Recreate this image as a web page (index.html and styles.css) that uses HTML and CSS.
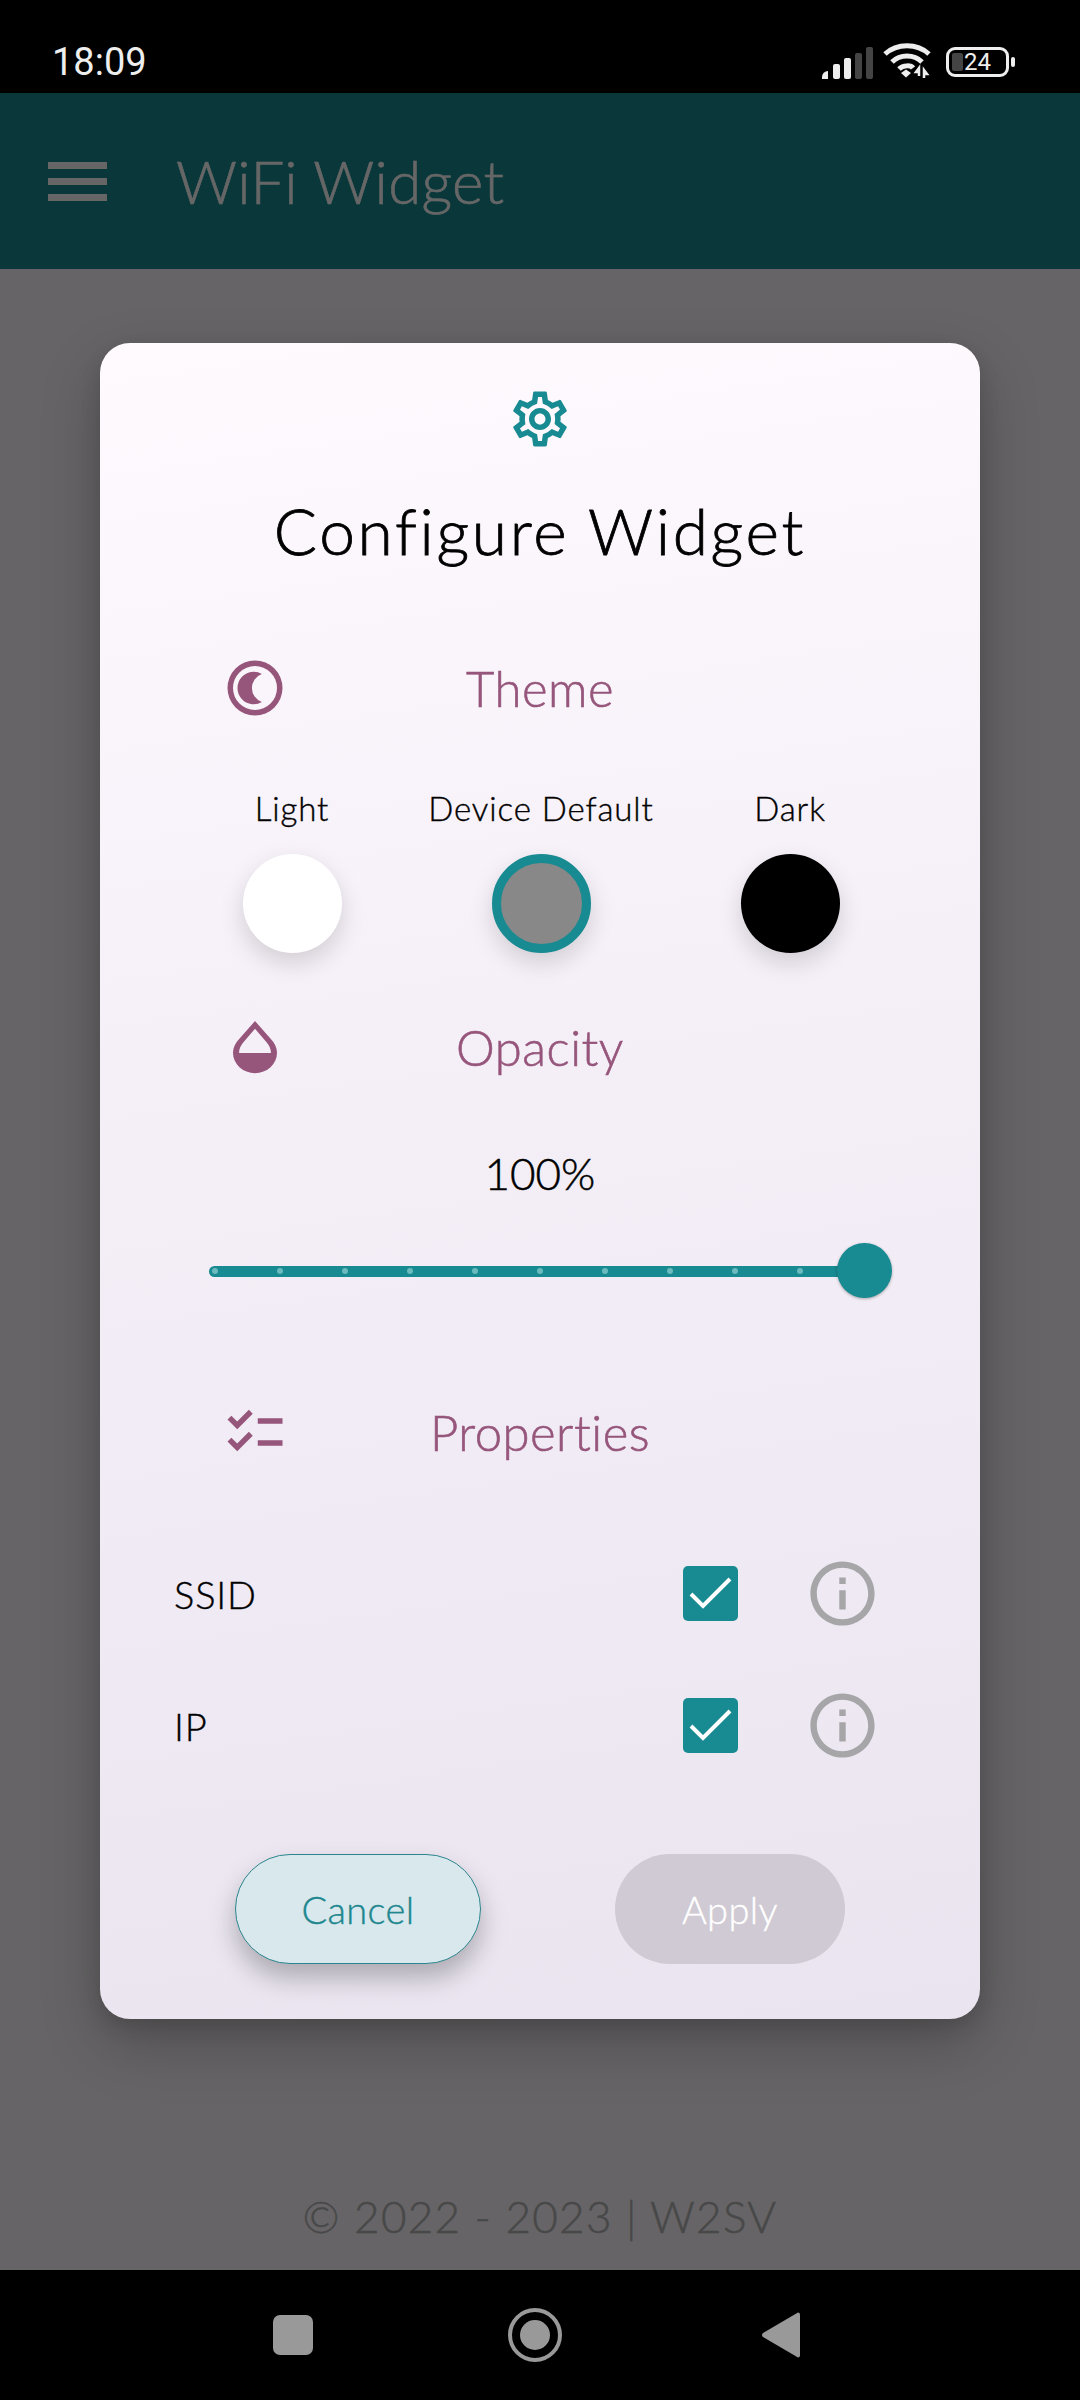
FILE: index.html
```html
<!DOCTYPE html>
<html lang="en">
  <head>
    <meta charset="UTF-8" />
    <meta name="viewport" content="width=device-width, initial-scale=1.0" />
    <title>WiFi Widget</title>
    <link rel="stylesheet" href="styles.css">
  </head>
  <body>
    <!-- status bar -->
    <header class="status-bar">
      <span class="status-time">18:09</span>
      <div class="status-icons">
        <svg class="icon-signal" width="58" height="32" viewBox="0 0 58 32">
          <path d="M0 30a6 6 0 0 1 6-6v8H0z" fill="#eee" />
          <rect x="11" y="17" width="7" height="15" rx="2" fill="#eee" />
          <rect x="22" y="11" width="7" height="21" rx="2" fill="#eee" />
          <rect x="33" y="6" width="7" height="26" rx="2" fill="#444" />
          <rect x="44" y="0" width="7" height="32" rx="2" fill="#444" />
        </svg>
        <svg class="icon-wifi" width="48" height="36" viewBox="0 0 48 36" fill="none" stroke="#eee" stroke-width="5">
          <path d="M2 11C14 0 34 0 46 11" />
          <path d="M9 19C17 11 31 11 39 19" />
          <path d="M16 26C20 22 28 22 30 25" />
          <path d="M18 30l5-3.500 5 3.500-5 4.500z" fill="#eee" stroke="none" />
          <path d="M36 25v8M36 25l-3 4h3zM41 35v-8l3 4h-3z" stroke-width="2.500" fill="#eee" />
        </svg>
        <div class="battery">
          <div class="battery-body">
            <span class="battery-fill"></span>
            <span class="battery-text">24</span>
          </div>
          <span class="battery-nub"></span>
        </div>
      </div>
    </header>

    <div class="app">
      <nav class="toolbar">
        <div class="menu-icon"><span></span><span></span><span></span></div>
        <span class="toolbar-title">WiFi Widget</span>
      </nav>
      <main class="app-body">
        <p class="copyright">© 2022 - 2023 | W2SV</p>
      </main>
      <div class="scrim"></div>

      <!-- config dialog -->
      <section class="dialog">
        <svg class="dialog-icon" width="66" height="66" viewBox="0 0 24 24" fill="#188a91">
          <path d="M19.43 12.98c.04-.32.07-.64.07-.98 0-.34-.03-.66-.07-.98l2.11-1.65c.19-.15.24-.42.12-.64l-2-3.46c-.09-.16-.26-.25-.44-.25-.06 0-.12.01-.17.03l-2.49 1c-.52-.4-1.08-.73-1.69-.98l-.38-2.65C14.46 2.18 14.25 2 14 2h-4c-.25 0-.46.18-.49.42l-.38 2.65c-.61.25-1.17.59-1.69.98l-2.49-1c-.06-.02-.12-.03-.18-.03-.17 0-.34.09-.43.25l-2 3.46c-.13.22-.07.49.12.64l2.11 1.65c-.04.32-.07.65-.07.98 0 .33.03.66.07.98l-2.11 1.65c-.19.15-.24.42-.12.64l2 3.46c.09.16.26.25.44.25.06 0 .12-.01.17-.03l2.49-1c.52.4 1.08.73 1.69.98l.38 2.65c.03.24.24.42.49.42h4c.25 0 .46-.18.49-.42l.38-2.65c.61-.25 1.17-.59 1.69-.98l2.49 1c.06.02.12.03.18.03.17 0 .34-.09.43-.25l2-3.46c.12-.22.07-.49-.12-.64l-2.11-1.65zm-1.98-1.71c.04.31.05.52.05.73 0 .21-.02.43-.05.73l-.14 1.13.89.7 1.08.84-.7 1.21-1.27-.51-1.04-.42-.9.68c-.43.32-.84.56-1.25.73l-1.06.43-.16 1.13-.2 1.35h-1.4l-.19-1.35-.16-1.13-1.06-.43c-.43-.18-.83-.41-1.23-.71l-.91-.7-1.06.43-1.27.51-.7-1.21 1.08-.84.89-.7-.14-1.13c-.03-.31-.05-.54-.05-.74s.02-.43.05-.73l.14-1.13-.89-.7-1.08-.84.7-1.21 1.27.51 1.04.42.9-.68c.43-.32.84-.56 1.25-.73l1.06-.43.16-1.13.2-1.35h1.39l.19 1.35.16 1.13 1.06.43c.43.18.83.41 1.23.71l.91.7 1.06-.43 1.27-.51.7 1.21-1.07.85-.89.7.14 1.13zM12 8c-2.21 0-4 1.79-4 4s1.79 4 4 4 4-1.79 4-4-1.79-4-4-4zm0 6c-1.1 0-2-.9-2-2s.9-2 2-2 2 .9 2 2-.9 2-2 2z" />
        </svg>
        <h1 class="dialog-title">Configure Widget</h1>

        <div class="section-head head-theme">
          <svg class="section-icon" width="66" height="66" viewBox="0 0 24 24" fill="#96557b">
            <path fill-rule="evenodd" d="M12 2a10 10 0 1 0 0 20 10 10 0 0 0 0-20zm0 2a8 8 0 1 1 0 16 8 8 0 0 1 0-16z" />
            <path d="M14.500 6.900A5.900 5.900 0 1 0 14.500 17.100A5.400 5.400 0 0 1 14.500 6.900z" />
          </svg>
          <h2 class="section-title">Theme</h2>
        </div>
        <div class="theme-options">
          <div class="theme-option">
            <span class="theme-label">Light</span>
            <span class="swatch swatch-light"></span>
          </div>
          <div class="theme-option">
            <span class="theme-label">Device Default</span>
            <span class="swatch swatch-default"></span>
          </div>
          <div class="theme-option">
            <span class="theme-label">Dark</span>
            <span class="swatch swatch-dark"></span>
          </div>
        </div>

        <div class="section-head head-opacity">
          <svg class="section-icon" width="66" height="66" viewBox="0 0 24 24" fill="#96557b">
            <path fill-rule="evenodd" d="M12 2.500l5.600 6.400c1.500 1.500 2.400 3.300 2.400 5.200a8 7.400 0 0 1-16 0c0-1.900.9-3.700 2.400-5.200zM12 5.400L7.800 10.300C6.800 11.400 6.200 12.800 6.200 14.200H17.800C17.800 12.800 17.200 11.400 16.200 10.300z" />
          </svg>
          <h2 class="section-title">Opacity</h2>
        </div>
        <div class="opacity-value">100%</div>
        <div class="slider">
          <div class="slider-track">
            <i></i><i></i><i></i><i></i><i></i><i></i><i></i><i></i><i></i><i></i>
          </div>
          <span class="slider-thumb"></span>
        </div>

        <div class="section-head head-props">
          <svg class="section-icon" width="66" height="66" viewBox="0 0 24 24" fill="#96557b">
            <path d="M22 7h-9v2h9V7zm0 8h-9v2h9v-2zM5.540 11 2 7.460l1.410-1.410 2.120 2.120 4.240-4.240 1.410 1.410L5.540 11zm0 8L2 15.460l1.410-1.410 2.120 2.120 4.240-4.240 1.410 1.410L5.540 19z" />
          </svg>
          <h2 class="section-title">Properties</h2>
        </div>
        <div class="prop-list">
          <div class="prop-row">
            <span class="prop-name">SSID</span>
            <span class="checkbox">
              <svg width="55" height="55" viewBox="0 0 55 55" fill="none" stroke="#fff" stroke-width="4"><path d="M8 28l12 12 27-27" /></svg>
            </span>
            <svg class="info-icon" width="77" height="77" viewBox="0 0 24 24" fill="#a6a6a8">
              <path d="M11 7h2v2h-2zm0 4h2v6h-2zm1-9C6.480 2 2 6.480 2 12s4.480 10 10 10 10-4.480 10-10S17.520 2 12 2zm0 18c-4.410 0-8-3.590-8-8s3.590-8 8-8 8 3.590 8 8-3.590 8-8 8z" />
            </svg>
          </div>
          <div class="prop-row">
            <span class="prop-name">IP</span>
            <span class="checkbox">
              <svg width="55" height="55" viewBox="0 0 55 55" fill="none" stroke="#fff" stroke-width="4"><path d="M8 28l12 12 27-27" /></svg>
            </span>
            <svg class="info-icon" width="77" height="77" viewBox="0 0 24 24" fill="#a6a6a8">
              <path d="M11 7h2v2h-2zm0 4h2v6h-2zm1-9C6.480 2 2 6.480 2 12s4.480 10 10 10 10-4.480 10-10S17.520 2 12 2zm0 18c-4.410 0-8-3.590-8-8s3.590-8 8-8 8 3.590 8 8-3.590 8-8 8z" />
            </svg>
          </div>
        </div>

        <div class="dialog-actions">
          <button class="btn btn-cancel">Cancel</button>
          <button class="btn btn-apply">Apply</button>
        </div>
      </section>
    </div>

    <!-- android nav bar -->
    <footer class="nav-bar">
      <span class="nav-square"></span>
      <span class="nav-home"><span></span></span>
      <svg class="nav-back" width="38" height="46" viewBox="0 0 38 46" fill="#999">
        <path d="M36 0.500a2 2 0 0 1 2 2v41a2 2 0 0 1-2 2L1 25a2.500 2.500 0 0 1 0-4z" />
      </svg>
    </footer>
  </body>
</html>
```

FILE: styles.css
```css
:root {
  --teal: #188a91;
  --plum: #96557b;
  --ui-font: "Lato", "Liberation Sans", sans-serif;
}

* {
  margin: 0;
  padding: 0;
  box-sizing: border-box;
}

body {
  width: 1080px;
  height: 2400px;
  display: flex;
  flex-direction: column;
  background: #000;
  font-family: var(--ui-font);
  overflow: hidden;
}

/* status bar */
.status-bar {
  height: 93px;
  display: flex;
  align-items: flex-end;
  justify-content: space-between;
  padding: 0 65px 15px 52px;
  color: #eee;
}

.status-time {
  font-family: "Roboto", sans-serif;
  font-size: 38px;
  font-weight: 400;
  line-height: 32px;
}

.status-icons {
  display: flex;
  align-items: flex-end;
  height: 32px;
}

.icon-signal {
  margin-right: 3px;
  margin-bottom: -1px;
}

.icon-wifi {
  margin-bottom: -1px;
  margin-right: 15px;
}

.battery {
  display: flex;
  align-items: center;
  gap: 2px;
  margin-bottom: 1px;
}

.battery-body {
  width: 63px;
  height: 30px;
  border: 3px solid #eee;
  border-radius: 9px;
  display: flex;
  align-items: center;
  padding-left: 3px;
  gap: 1px;
}

.battery-fill {
  width: 11px;
  height: 18px;
  background: #444;
  border-radius: 2px;
}

.battery-text {
  font-family: "Roboto", sans-serif;
  font-size: 24px;
  line-height: 1;
}

.battery-nub {
  width: 4px;
  height: 10px;
  background: #eee;
  border-radius: 2px;
}

/* app under the dialog */
.app {
  position: relative;
  flex: 1;
  display: flex;
  flex-direction: column;
}

.toolbar {
  height: 176px;
  background: var(--teal);
  display: flex;
  align-items: center;
  padding-left: 48px;
  color: #fff;
}

.menu-icon {
  width: 59px;
  display: flex;
  flex-direction: column;
  gap: 9px;
}

.menu-icon span {
  height: 7px;
  background: #fff;
}

.toolbar-title {
  margin-left: 69px;
  font-size: 60px;
  font-weight: 300;
  -webkit-text-stroke: 0.6px currentColor;
  letter-spacing: 0.3px;
}

.app-body {
  flex: 1;
  background: #fffbfe;
  display: flex;
  flex-direction: column;
  justify-content: flex-end;
  align-items: center;
  padding-bottom: 27px;
}

.copyright {
  font-size: 44px;
  font-weight: 300;
  -webkit-text-stroke: 0.5px currentColor;
  line-height: 54px;
  color: #b4b4b6;
  letter-spacing: 1.3px;
}

.scrim {
  position: absolute;
  inset: 0;
  background: rgba(0, 0, 0, 0.6);
}

/* dialog */
.dialog {
  position: absolute;
  left: 100px;
  top: 250px;
  width: 880px;
  height: 1676px;
  padding-top: 43px;
  border-radius: 30px;
  background: linear-gradient(172deg, #fffafe 0%, #f4eff7 45%, #e9e4ef 100%);
  box-shadow: 0 24px 60px rgba(0, 0, 0, 0.22), 0 8px 20px rgba(0, 0, 0, 0.12);
  display: flex;
  flex-direction: column;
}

.dialog-icon {
  align-self: center;
}

.dialog-title {
  margin-top: 39px;
  height: 80px;
  line-height: 80px;
  text-align: center;
  font-size: 64px;
  font-weight: 300;
  -webkit-text-stroke: 0.8px currentColor;
  letter-spacing: 2.7px;
  color: #000;
}

.section-head {
  display: grid;
  grid-template-columns: 1fr auto 1fr;
  align-items: center;
  height: 66px;
}

.section-icon {
  margin-left: 122px;
}

.section-title {
  font-size: 49px;
  font-weight: 300;
  -webkit-text-stroke: 0.6px currentColor;
  line-height: 66px;
  color: var(--plum);
  letter-spacing: 0.5px;
}

.head-theme {
  margin-top: 84px;
}

.head-opacity {
  margin-top: 46px;
}

.head-props {
  margin-top: 100px;
}

/* theme swatches */
.theme-options {
  display: flex;
  justify-content: center;
  gap: 150px;
  margin-top: 67px;
  padding-left: 2px;
  height: 180px;
}

.theme-option {
  width: 99px;
  display: flex;
  flex-direction: column;
  align-items: center;
  gap: 26px;
}

.theme-label {
  font-size: 33px;
  font-weight: 300;
  -webkit-text-stroke: 0.4px currentColor;
  line-height: 40px;
  white-space: nowrap;
  letter-spacing: 0.9px;
  color: #000;
}

.swatch {
  width: 99px;
  height: 99px;
  border-radius: 50%;
  flex-shrink: 0;
  box-shadow: 0 10px 24px rgba(0, 0, 0, 0.15);
}

.swatch-light {
  background: #fff;
}

.swatch-default {
  background: #888;
  border: 9px solid var(--teal);
}

.swatch-dark {
  background: #000;
}

/* opacity slider */
.opacity-value {
  margin-top: 66px;
  text-align: center;
  font-size: 44px;
  font-weight: 300;
  -webkit-text-stroke: 0.5px currentColor;
  line-height: 54px;
  color: #000;
}

.slider {
  position: relative;
  margin: 43px 88px 0 109px;
  height: 56px;
  display: flex;
  align-items: center;
}

.slider-track {
  flex: 1;
  height: 11px;
  margin-right: 40px;
  border-radius: 6px;
  background: var(--teal);
  display: flex;
  align-items: center;
  padding-left: 3px;
  gap: 59px;
}

.slider-track i {
  width: 6px;
  height: 6px;
  border-radius: 50%;
  background: #6bbabd;
}

.slider-thumb {
  position: absolute;
  right: 0;
  top: 0;
  width: 55px;
  height: 55px;
  border-radius: 50%;
  background: var(--teal);
  box-shadow: 0 1px 3px rgba(0, 0, 0, 0.3);
}

/* property rows */
.prop-list {
  margin-top: 90px;
  padding: 0 99px 0 74px;
  display: flex;
  flex-direction: column;
  gap: 55px;
}

.prop-row {
  display: flex;
  align-items: center;
  height: 77px;
}

.prop-name {
  flex: 1;
  font-size: 38px;
  font-weight: 300;
  -webkit-text-stroke: 0.4px currentColor;
  color: #000;
  letter-spacing: 0.8px;
}

.checkbox {
  width: 55px;
  height: 55px;
  background: var(--teal);
  border-radius: 5px;
  display: flex;
}

.info-icon {
  margin-left: 66px;
}

/* buttons */
.dialog-actions {
  margin-top: 90px;
  padding-left: 135px;
  display: flex;
  gap: 134px;
}

.btn {
  height: 110px;
  border-radius: 55px;
  font-family: var(--ui-font);
  font-size: 38px;
  font-weight: 300;
  -webkit-text-stroke: 0.4px currentColor;
  letter-spacing: 0.4px;
  border: none;
}

.btn-cancel {
  width: 246px;
  background: #d8e8ec;
  border: 1.5px solid #2c858e;
  color: #1e878f;
  box-shadow: 0 14px 26px rgba(0, 0, 0, 0.26);
}

.btn-apply {
  width: 230px;
  background: #cfcad3;
  color: #fff;
}

/* android nav bar */
.nav-bar {
  height: 130px;
  position: relative;
  display: flex;
  align-items: center;
  padding-left: 273px;
}

.nav-square {
  width: 40px;
  height: 40px;
  border-radius: 7px;
  background: #999;
}

.nav-home {
  margin-left: 195px;
  width: 54px;
  height: 54px;
  border: 4px solid #999;
  border-radius: 50%;
  display: flex;
  align-items: center;
  justify-content: center;
}

.nav-home span {
  width: 30px;
  height: 30px;
  border-radius: 50%;
  background: #999;
}

.nav-back {
  margin-left: 200px;
}
```
